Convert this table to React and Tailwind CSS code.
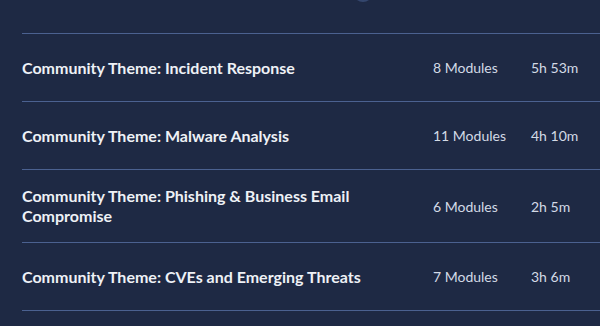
import React from "react";

const themes = [
  { title: "Community Theme: Incident Response", modules: "8 Modules", time: "5h 53m" },
  { title: "Community Theme: Malware Analysis", modules: "11 Modules", time: "4h 10m" },
  {
    title: "Community Theme: Phishing & Business Email Compromise",
    modules: "6 Modules",
    time: "2h 5m",
  },
  { title: "Community Theme: CVEs and Emerging Threats", modules: "7 Modules", time: "3h 6m" },
];

export default function App() {
  return (
    <div
      className="relative w-[600px] h-[326px] overflow-hidden bg-[#1e2944] pl-[22px] pt-[33px]"
      style={{ fontFamily: "Lato, 'Open Sans', sans-serif" }}
    >
      {/* bottom edge of something above the fold */}
      <div className="absolute left-[353px] top-[-18px] w-[20px] h-[20px] rounded-full bg-[#34466d]" />

      <div className="flex flex-col border-t border-[#4b6190]">
        {themes.map((t) => (
          <div
            key={t.title}
            className="flex items-center min-h-[68px] py-[16px] border-b border-[#4b6190]"
          >
            <p className="w-[411px] pr-[40px] text-[16px] leading-[20px] font-bold text-[#eef1f6]">
              {t.title}
            </p>
            <p className="w-[98px] text-[14px] text-[#d3dae6]">{t.modules}</p>
            <p className="flex-1 text-[14px] text-[#d3dae6]">{t.time}</p>
          </div>
        ))}
      </div>
    </div>
  );
}
